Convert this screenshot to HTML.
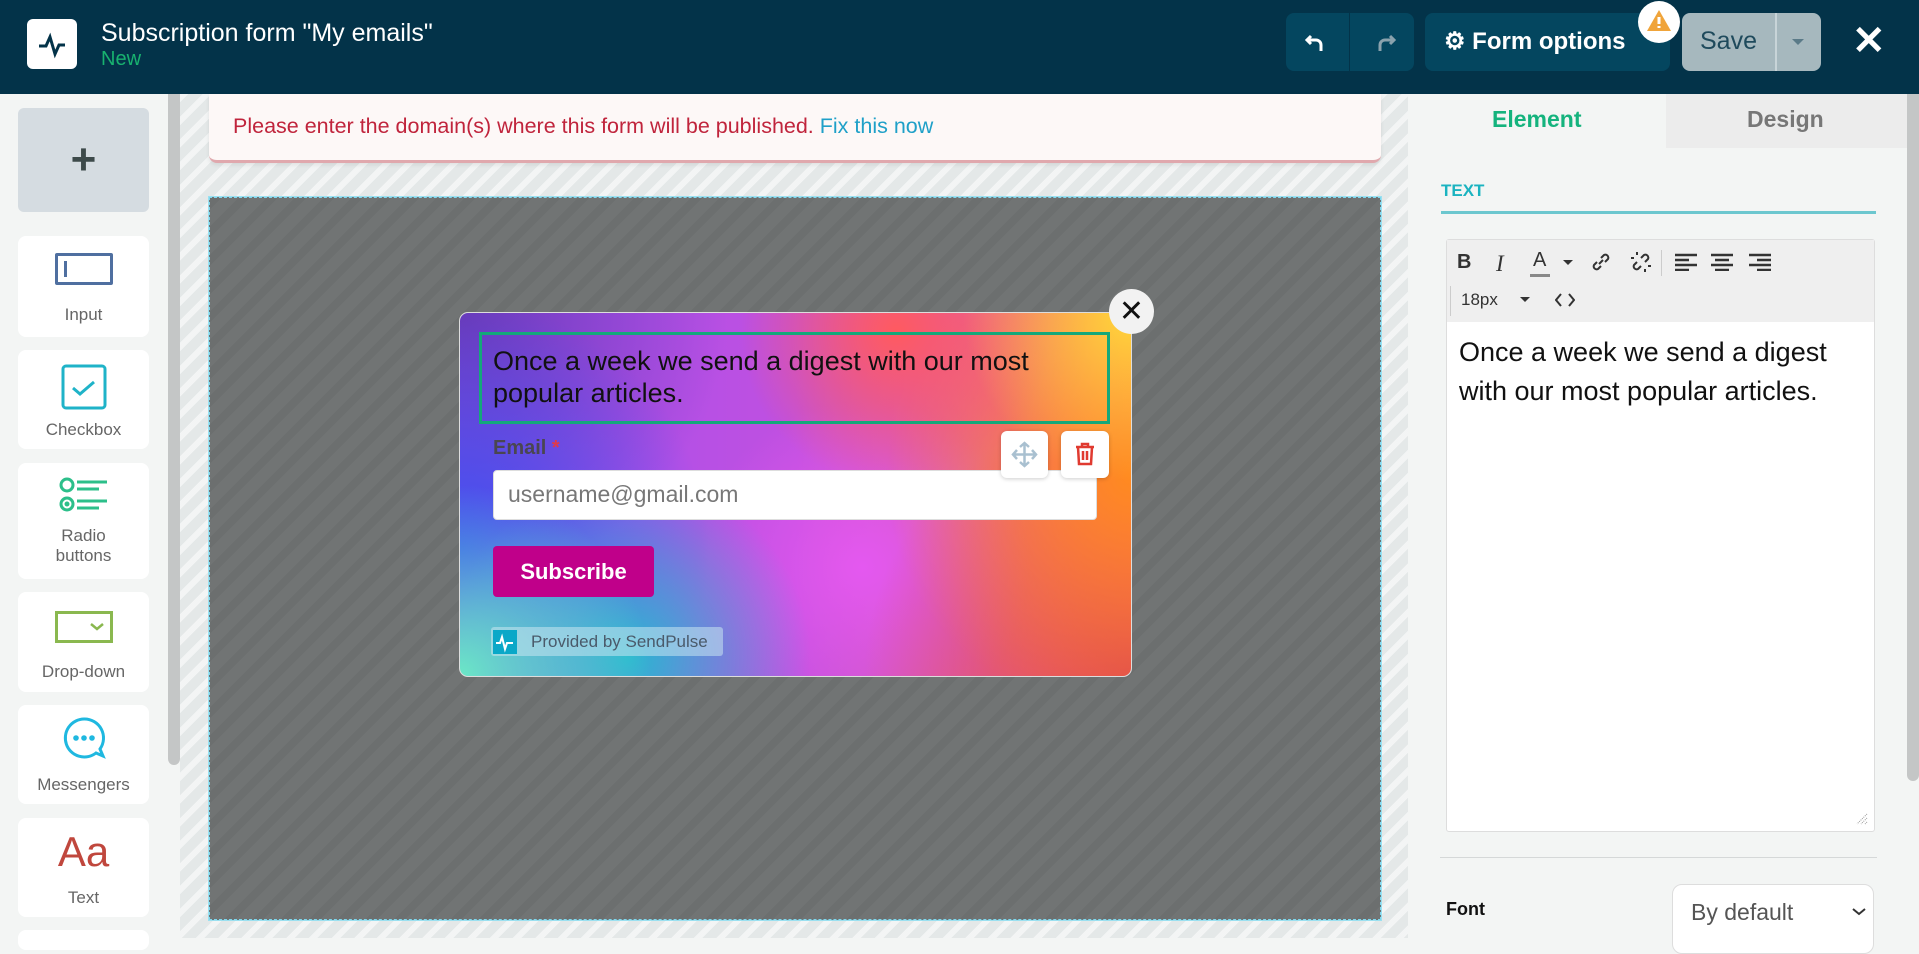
<!DOCTYPE html>
<html><head><meta charset="utf-8"><style>
*{box-sizing:border-box;margin:0;padding:0}
body{width:1919px;height:938px;overflow:hidden;font-family:"Liberation Sans",Arial,sans-serif;background:#f3f5f4;position:relative}
.abs{position:absolute}
.hdr{left:0;top:0;width:1919px;height:94px;background:#033349}
.card{position:absolute;left:18px;width:131px;background:#fff;border-radius:8px;text-align:center;color:#666;font-size:17px}
.stripes{background-color:#e4e8e8;background-image:repeating-linear-gradient(135deg,rgba(255,255,255,.55) 0 6px,transparent 6px 16px)}
.dark{background-color:#717474;background-image:repeating-linear-gradient(135deg,rgba(0,0,0,.045) 0 8px,transparent 8px 20px)}
.tb{position:absolute;color:#333;font-size:20px}
</style></head><body>
<div class="abs hdr"></div>
<div class="abs" style="left:27px;top:19px;width:50px;height:50px;background:#fff;border-radius:6px"></div>
<svg class="abs" style="left:27px;top:19px" width="50" height="50" viewBox="0 0 50 50"><path d="M12 27h7l4-9 5 17 4-9h6" fill="none" stroke="#033349" stroke-width="3"/></svg>
<div class="abs" style="left:101px;top:19px;color:#fff;font-size:25px">Subscription form "My emails"</div>
<div class="abs" style="left:101px;top:48px;color:#18b26f;font-size:20px">New</div>
<div class="abs" style="left:1286px;top:13px;width:128px;height:58px;background:#04465f;border-radius:8px"></div>
<div class="abs" style="left:1349px;top:13px;width:1px;height:58px;background:#033349"></div>
<svg class="abs" style="left:1303px;top:28px" width="30" height="30" viewBox="0 0 30 30"><path d="M8 8l-4 4 4 4M4 12h9a5 5 0 0 1 5 5v6" fill="none" stroke="#fff" stroke-width="3"/></svg>
<svg class="abs" style="left:1368px;top:28px" width="30" height="30" viewBox="0 0 30 30"><path d="M22 8l4 4-4 4M26 12h-9a5 5 0 0 0-5 5v6" fill="none" stroke="#8aa2ad" stroke-width="3"/></svg>
<div class="abs" style="left:1425px;top:13px;width:245px;height:58px;background:#04465f;border-radius:8px"></div>
<div class="abs" style="left:1444px;top:27px;color:#fff;font-size:24px;font-weight:bold">⚙ Form options</div>
<div class="abs" style="left:1638px;top:1px;width:42px;height:42px;background:#fff;border-radius:50%"></div>
<svg class="abs" style="left:1645px;top:7px" width="28" height="28" viewBox="0 0 28 28"><path d="M14 3L26 24H2z" fill="#f0a43a"/><path d="M14 10v7M14 19v2" stroke="#fff" stroke-width="3"/></svg>
<div class="abs" style="left:1682px;top:13px;width:139px;height:58px;background:#a6b8be;border-radius:8px"></div>
<div class="abs" style="left:1775px;top:13px;width:2px;height:58px;background:#c8d4d8"></div>
<div class="abs" style="left:1700px;top:27px;color:#1f4a5c;font-size:25px">Save</div>
<div class="abs" style="left:1792px;top:39px;border:6px solid transparent;border-top-color:#5a7a88"></div>
<div class="abs" style="left:1852px;top:18px;color:#fff;font-size:40px;font-weight:bold">✕</div>

<!-- left sidebar -->
<div class="abs" style="left:18px;top:108px;width:131px;height:104px;background:#d5dce1;border-radius:6px;text-align:center;line-height:104px;font-size:44px;color:#3d4a4a;font-weight:bold">+</div>
<div class="card" style="top:236px;height:101px"><div style="margin:17px auto 0;width:58px;height:32px;border:3px solid #4f6fa0;border-radius:2px;position:relative"><div style="position:absolute;left:6px;top:5px;width:3px;height:16px;background:#4f6fa0"></div></div><div style="margin-top:20px">Input</div></div>
<div class="card" style="top:350px;height:99px"><svg style="margin-top:14px" width="46" height="46" viewBox="0 0 46 46"><rect x="2" y="2" width="42" height="42" rx="3" fill="none" stroke="#1fb3c8" stroke-width="3"/><path d="M12 24l7 6 14-12" fill="none" stroke="#1fb3c8" stroke-width="3"/></svg><div style="margin-top:5px">Checkbox</div></div>
<div class="card" style="top:463px;height:116px"><svg style="margin-top:14px" width="50" height="40" viewBox="0 0 50 40"><circle cx="8" cy="8" r="6" fill="none" stroke="#2cbf8a" stroke-width="3"/><circle cx="8" cy="27" r="6" fill="none" stroke="#2cbf8a" stroke-width="3"/><circle cx="8" cy="27" r="2.5" fill="#2cbf8a"/><path d="M18 5h30M18 12h22M18 24h30M18 31h22" stroke="#2cbf8a" stroke-width="3"/></svg><div style="line-height:20px;margin-top:4px">Radio<br>buttons</div></div>
<div class="card" style="top:592px;height:100px"><div style="margin:19px auto 0;width:58px;height:32px;border:3px solid #8ab84f;position:relative"><svg style="position:absolute;right:6px;top:8px" width="14" height="10"><path d="M1 2l6 5 6-5" fill="none" stroke="#8ab84f" stroke-width="2.5"/></svg></div><div style="margin-top:19px">Drop-down</div></div>
<div class="card" style="top:705px;height:99px"><svg style="margin-top:10px" width="46" height="46" viewBox="0 0 46 46"><path d="M23 4a19 19 0 1 0 12 34l7 3-3-7A19 19 0 0 0 23 4z" fill="none" stroke="#1fb8e0" stroke-width="3"/><circle cx="15" cy="23" r="2.8" fill="#1fb8e0"/><circle cx="23" cy="23" r="2.8" fill="#1fb8e0"/><circle cx="31" cy="23" r="2.8" fill="#1fb8e0"/></svg><div style="margin-top:9px">Messengers</div></div>
<div class="card" style="top:818px;height:99px"><div style="color:#c0473d;font-size:42px;margin-top:12px;line-height:44px">Aa</div><div style="margin-top:14px">Text</div></div>
<div class="card" style="top:930px;height:20px"></div>
<div class="abs" style="left:168px;top:94px;width:12px;height:671px;background:#c4c6c6;border-radius:0 0 6px 6px"></div>

<!-- canvas -->
<div class="abs stripes" style="left:180px;top:94px;width:1228px;height:844px"></div>
<div class="abs" style="left:209px;top:94px;width:1172px;height:69px;background:#fdf8f7;border-bottom:3px solid #e0a8ad;border-radius:0 0 8px 8px;box-shadow:0 2px 4px rgba(0,0,0,.08)"></div>
<div class="abs" style="left:233px;top:114px;font-size:21.5px;color:#c0243c">Please enter the domain(s) where this form will be published. <span style="color:#1fa0c8">Fix this now</span></div>
<div class="abs dark" style="left:209px;top:197px;width:1172px;height:723px;border:1px dashed #7fd8ee;outline:1px solid #9be0f0"></div>

<!-- popup -->
<div class="abs" style="left:459px;top:312px;width:673px;height:365px;border-radius:9px;border:1px solid #ddd;overflow:hidden;background:
radial-gradient(circle at 100% 0%,#ffd838 0,rgba(255,216,56,0) 22%),
radial-gradient(circle at 65% 5%,#ff5a60 0,rgba(255,90,96,0) 28%),
radial-gradient(circle at 100% 45%,#ff8a20 0,rgba(255,138,32,0) 35%),
radial-gradient(circle at 100% 100%,#e04a50 0,rgba(224,74,80,0) 35%),
radial-gradient(circle at 0% 100%,#6ae8c6 0,rgba(106,232,198,0) 25%),
radial-gradient(circle at 25% 95%,#2ab8d0 0,rgba(42,184,208,0) 30%),
radial-gradient(circle at 0% 65%,#3a50f0 0,rgba(58,80,240,0) 35%),
radial-gradient(circle at 60% 70%,#e458f0 0,rgba(228,88,240,0) 35%),
radial-gradient(circle at 0% 0%,#6a3ab8 0,rgba(106,58,184,0) 35%),
linear-gradient(90deg,#a050f0,#c050e0 50%,#ff6a70)"></div>
<div class="abs" style="left:479px;top:332px;width:631px;height:92px;border:3px solid #14a87a"></div>
<div class="abs" style="left:493px;top:345px;width:610px;font-size:27px;line-height:32px;color:#111">Once a week we send a digest with our most popular articles.</div>
<div class="abs" style="left:1109px;top:289px;width:45px;height:45px;border-radius:50%;background:#f2f2f2;text-align:center;line-height:45px;font-size:30px;color:#111">✕</div>
<div class="abs" style="left:493px;top:437px;font-size:20px;font-weight:bold;color:#4a4650">Email <span style="color:#e03a4a">*</span></div>
<div class="abs" style="left:493px;top:470px;width:604px;height:50px;background:#fff;border-radius:4px;border:1px solid #ddd"></div>
<div class="abs" style="left:508px;top:481px;font-size:23px;color:#777">username@gmail.com</div>
<div class="abs" style="left:1001px;top:431px;width:47px;height:47px;background:#fff;border-radius:6px;box-shadow:0 1px 4px rgba(0,0,0,.2)"></div>
<svg class="abs" style="left:1010px;top:440px" width="29" height="29" viewBox="0 0 29 29"><path d="M14.5 3v23M3 14.5h23M10 7l4.5-4 4.5 4M10 22l4.5 4 4.5-4M7 10l-4 4.5 4 4.5M22 10l4 4.5-4 4.5" fill="none" stroke="#a9c0d0" stroke-width="2.5"/></svg>
<div class="abs" style="left:1061px;top:431px;width:48px;height:47px;background:#fff;border-radius:6px;box-shadow:0 1px 4px rgba(0,0,0,.2)"></div>
<svg class="abs" style="left:1071px;top:440px" width="28" height="28" viewBox="0 0 28 28"><path d="M5 7h18M11 7V4h6v3M7 7l1 17h12l1-17M12 11v9M16 11v9" fill="none" stroke="#e03a30" stroke-width="2.5"/></svg>
<div class="abs" style="left:493px;top:546px;width:161px;height:51px;background:#c0008a;border-radius:4px;color:#fff;font-weight:bold;font-size:22px;text-align:center;line-height:51px">Subscribe</div>
<div class="abs" style="left:491px;top:627px;width:232px;height:29px;background:rgba(200,230,240,.55);border-radius:3px"></div>
<div class="abs" style="left:493px;top:630px;width:24px;height:24px;background:#0aa8c8"></div>
<svg class="abs" style="left:493px;top:630px" width="24" height="24"><path d="M3 13h4l2-6 3 12 2-6h6" fill="none" stroke="#fff" stroke-width="2"/></svg>
<div class="abs" style="left:531px;top:632px;font-size:17px;color:#4a5a6a">Provided by SendPulse</div>

<!-- right panel -->
<div class="abs" style="left:1408px;top:94px;width:499px;height:844px;background:#f3f5f4"></div>
<div class="abs" style="left:1666px;top:94px;width:241px;height:54px;background:#ececec"></div>
<div class="abs" style="left:1492px;top:106px;font-size:23px;font-weight:bold;color:#14b37d">Element</div>
<div class="abs" style="left:1747px;top:106px;font-size:23px;font-weight:bold;color:#777">Design</div>
<div class="abs" style="left:1907px;top:94px;width:12px;height:687px;background:#c4c6c6;border-radius:0 0 6px 6px"></div>
<div class="abs" style="left:1441px;top:181px;font-size:17px;font-weight:bold;color:#1ab3c0">TEXT</div>
<div class="abs" style="left:1441px;top:211px;width:435px;height:3px;background:#6cc7cf"></div>
<div class="abs" style="left:1446px;top:239px;width:429px;height:593px;background:#fff;border:1px solid #ddd;border-radius:3px"></div>
<div class="abs" style="left:1447px;top:240px;width:427px;height:82px;background:#efefef"></div>
<div class="tb" style="left:1457px;top:251px;font-weight:bold">B</div>
<div class="tb" style="left:1496px;top:251px;font-style:italic;font-family:'Liberation Serif',serif;font-size:23px">I</div>
<div class="tb" style="left:1533px;top:249px">A</div>
<div class="abs" style="left:1530px;top:274px;width:20px;height:3px;background:#888"></div>
<div class="abs" style="left:1563px;top:260px;border:5px solid transparent;border-top-color:#333"></div>
<svg class="abs" style="left:1590px;top:251px" width="22" height="22" viewBox="0 0 22 22"><path d="M9 13l4-4M7 11l-3 3a3 3 0 0 0 4 4l3-3M15 11l3-3a3 3 0 0 0-4-4l-3 3" fill="none" stroke="#333" stroke-width="2"/></svg>
<svg class="abs" style="left:1630px;top:251px" width="22" height="22" viewBox="0 0 22 22"><path d="M7 11l-3 3a3 3 0 0 0 4 4l3-3M15 11l3-3a3 3 0 0 0-4-4l-3 3M4 7H1M7 4V1M18 15h3M15 18v3" fill="none" stroke="#333" stroke-width="2"/></svg>
<div class="abs" style="left:1661px;top:250px;width:1px;height:26px;background:#ccc"></div>
<svg class="abs" style="left:1675px;top:253px" width="22" height="18"><path d="M0 2h22M0 7h14M0 12h22M0 17h14" stroke="#333" stroke-width="2.5"/></svg>
<svg class="abs" style="left:1711px;top:253px" width="22" height="18"><path d="M0 2h22M4 7h14M0 12h22M4 17h14" stroke="#333" stroke-width="2.5"/></svg>
<svg class="abs" style="left:1749px;top:253px" width="22" height="18"><path d="M0 2h22M8 7h14M0 12h22M8 17h14" stroke="#333" stroke-width="2.5"/></svg>
<div class="abs" style="left:1450px;top:286px;width:1px;height:30px;background:#ccc"></div>
<div class="abs" style="left:1461px;top:290px;font-size:17px;color:#333">18px</div>
<div class="abs" style="left:1520px;top:297px;border:5px solid transparent;border-top-color:#333"></div>
<svg class="abs" style="left:1555px;top:292px" width="20" height="16"><path d="M6 2L1 8l5 6M14 2l5 6-5 6" fill="none" stroke="#333" stroke-width="2"/></svg>
<div class="abs" style="left:1459px;top:333px;width:400px;font-size:27px;line-height:39px;color:#111">Once a week we send a digest with our most popular articles.</div>
<svg class="abs" style="left:1856px;top:813px" width="12" height="12"><path d="M11 1L1 11M11 5L5 11M11 9L9 11" stroke="#999" stroke-width="1" stroke-dasharray="1 1"/></svg>
<div class="abs" style="left:1440px;top:857px;width:437px;height:1px;background:#d5d8d8"></div>
<div class="abs" style="left:1446px;top:899px;font-size:18px;font-weight:bold;color:#111">Font</div>
<div class="abs" style="left:1672px;top:884px;width:202px;height:70px;background:#fff;border:1px solid #ddd;border-radius:10px"></div>
<div class="abs" style="left:1691px;top:899px;font-size:23px;color:#555">By default</div>
<svg class="abs" style="left:1852px;top:907px" width="14" height="10"><path d="M1 2l6 5 6-5" fill="none" stroke="#333" stroke-width="2"/></svg>
</body></html>
